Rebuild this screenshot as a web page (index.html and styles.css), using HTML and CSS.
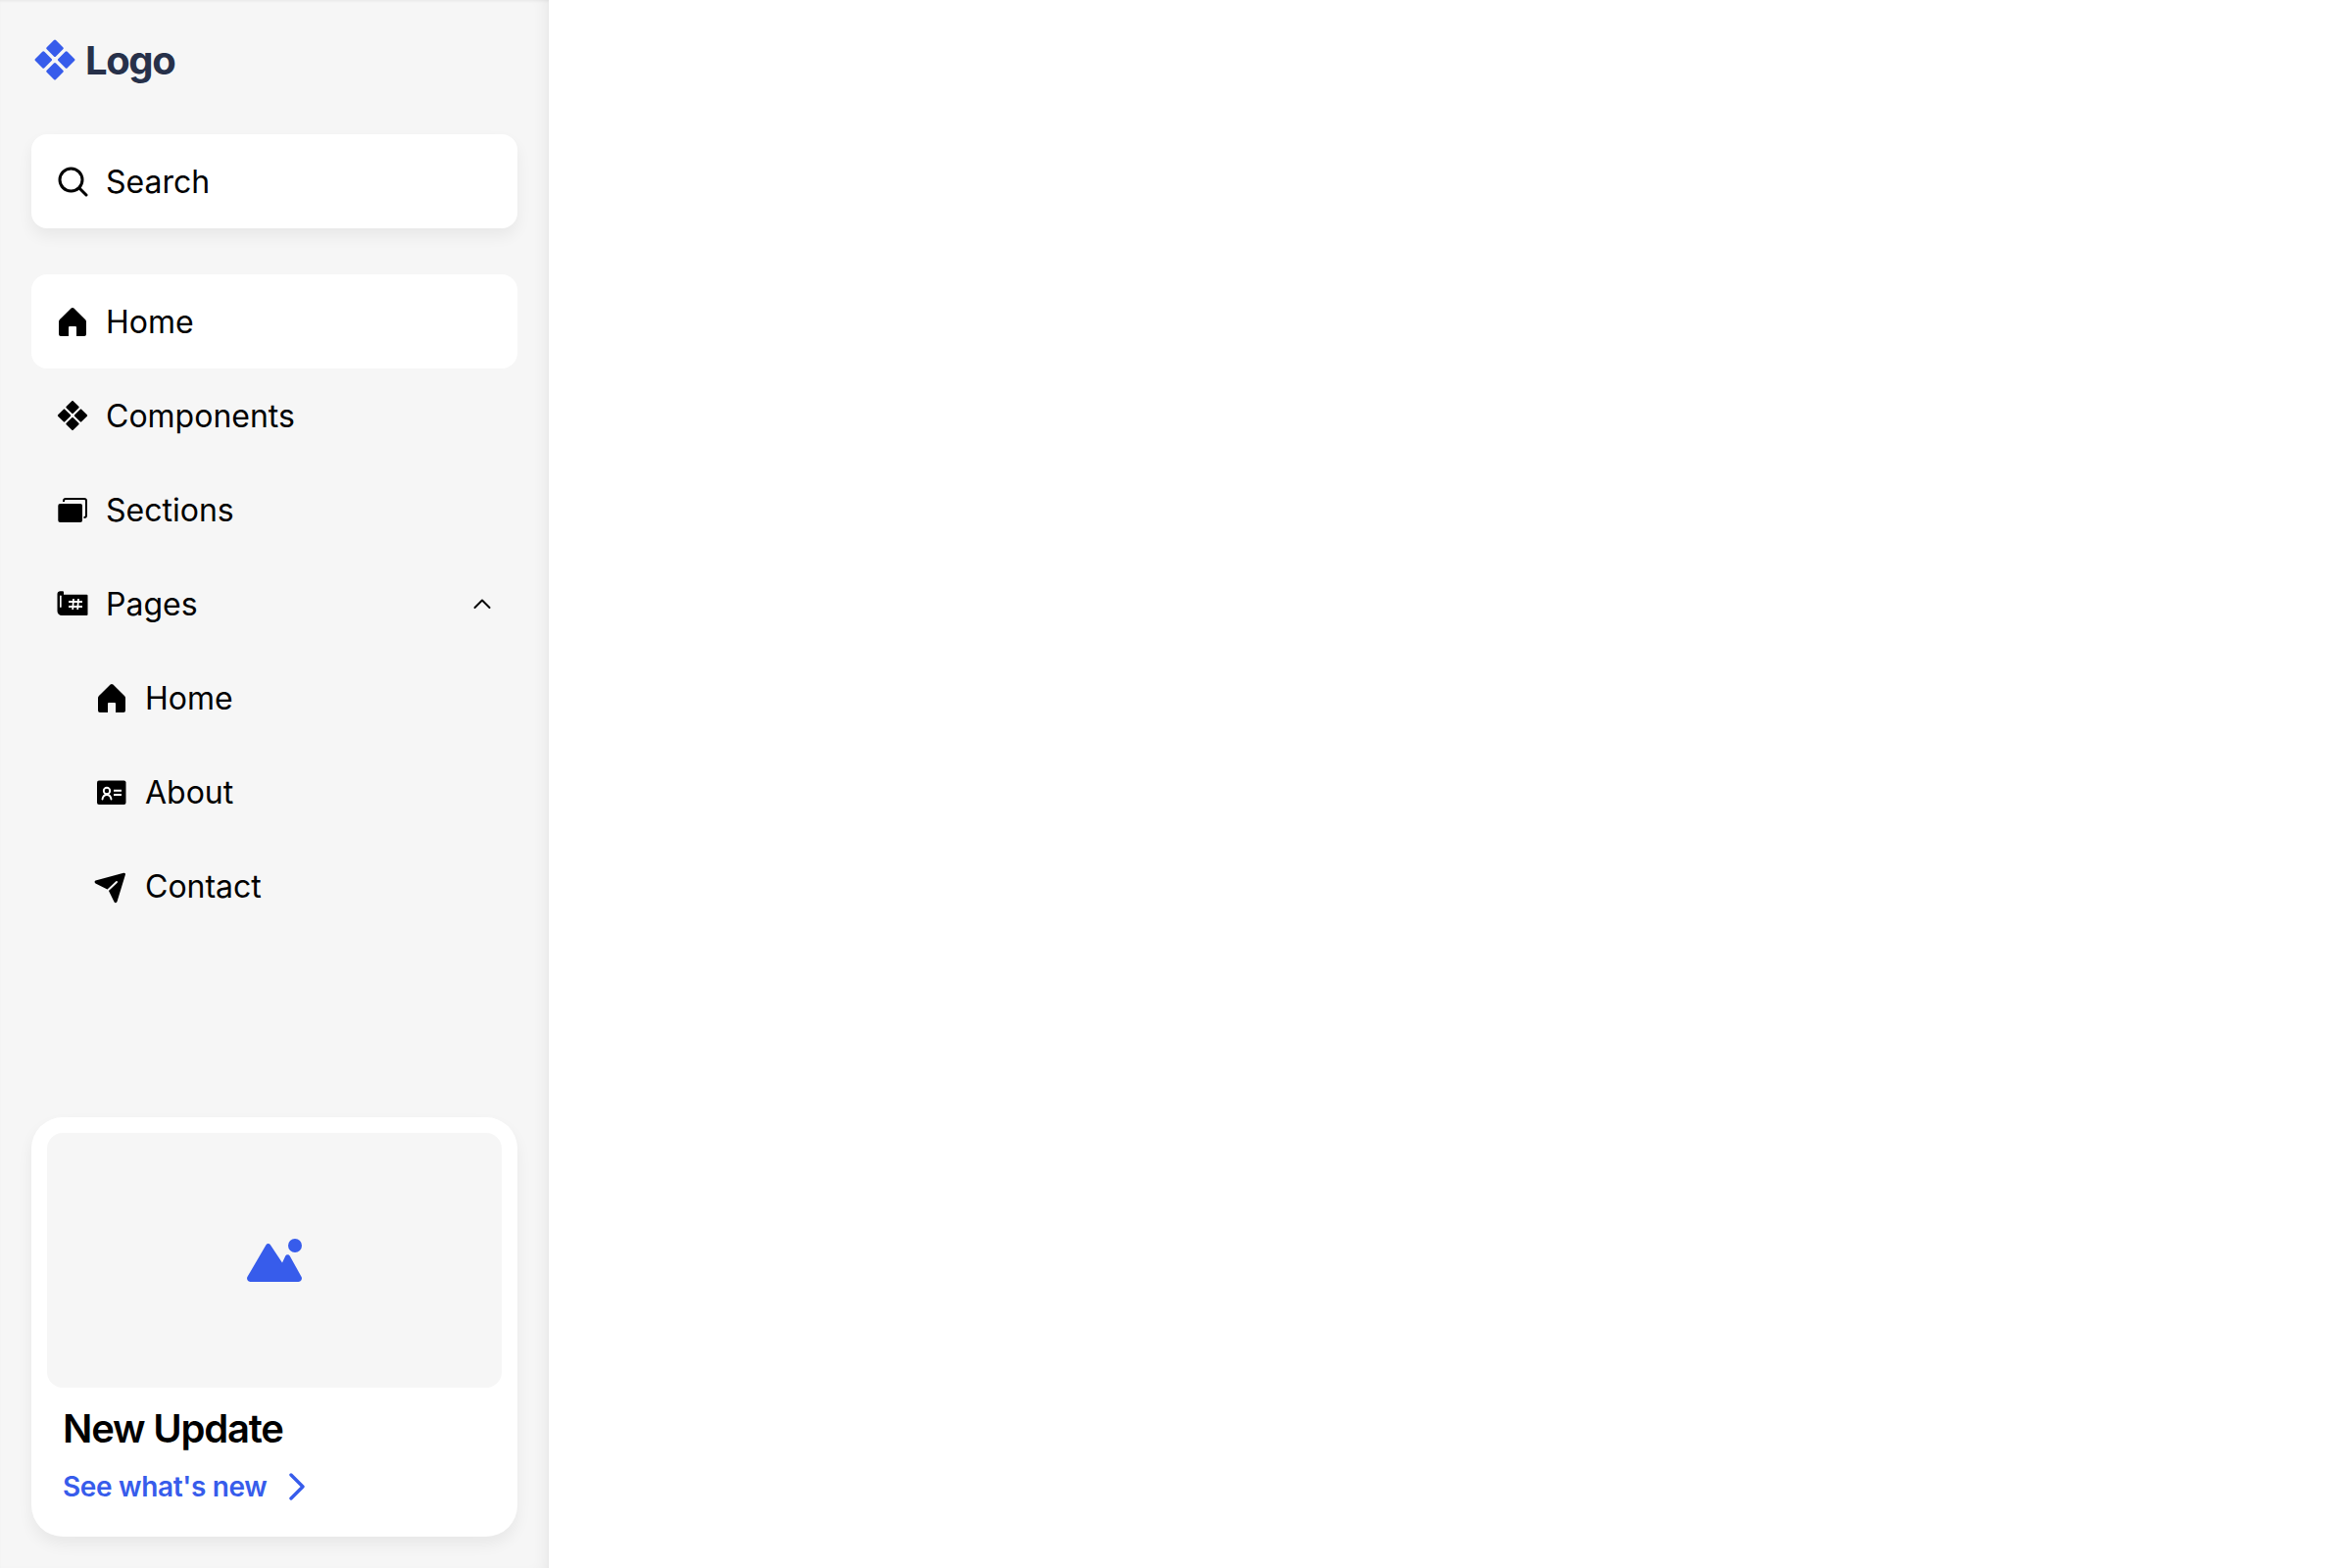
FILE: index.html
```html
<!DOCTYPE html>
<html lang="en">
<head>
    <meta charset="UTF-8">
    <title>Sidebar</title>
    <link rel="stylesheet" href="styles.css">
</head>
<body>
    <aside class="sidebar">
        <div class="logo">
            <svg class="logo-icon" viewBox="0 0 42 42" fill="#375ceb">
                <rect x="14.4" y="2.7" width="13.2" height="13.2" rx="1.5" transform="rotate(45 21 9.3)"/>
                <rect x="14.4" y="26.1" width="13.2" height="13.2" rx="1.5" transform="rotate(45 21 32.7)"/>
                <rect x="2.7" y="14.4" width="13.2" height="13.2" rx="1.5" transform="rotate(45 9.3 21)"/>
                <rect x="26.1" y="14.4" width="13.2" height="13.2" rx="1.5" transform="rotate(45 32.7 21)"/>
            </svg>
            <span class="logo-text">Logo</span>
        </div>

        <div class="search">
            <svg class="icon" viewBox="0 0 32 32" fill="none" stroke="#000" stroke-width="3" stroke-linecap="round">
                <circle cx="14.5" cy="14.5" r="11.5"/>
                <path d="M23 23l7 7"/>
            </svg>
            <span>Search</span>
        </div>

        <nav class="nav">
            <a class="nav-item active">
                <svg class="icon" viewBox="0 0 32 32"><path d="M14.6 2.6a2 2 0 0 1 2.800 0L29 14a3 3 0 0 1 1 2v13a2 2 0 0 1-2 2h-8v-9a1 1 0 0 0-1-1h-6a1 1 0 0 0-1 1v9H4a2 2 0 0 1-2-2V16a3 3 0 0 1 1-2z"/></svg>
                <span>Home</span>
            </a>
            <a class="nav-item">
                <svg class="icon" viewBox="0 0 32 32">
                    <rect x="11" y="2.500" width="10" height="10" rx="1" transform="rotate(45 16 7.500)"/>
                    <rect x="11" y="19.500" width="10" height="10" rx="1" transform="rotate(45 16 24.500)"/>
                    <rect x="2.500" y="11" width="10" height="10" rx="1" transform="rotate(45 7.500 16)"/>
                    <rect x="19.500" y="11" width="10" height="10" rx="1" transform="rotate(45 24.500 16)"/>
                </svg>
                <span>Components</span>
            </a>
            <a class="nav-item">
                <svg class="icon" viewBox="0 0 32 32">
                    <rect x="7" y="5" width="23" height="19" rx="2" fill="none" stroke="#000" stroke-width="2"/>
                    <rect x="0" y="8" width="27.500" height="22" rx="3" fill="#f6f6f6"/>
                    <rect x="1.300" y="10" width="24.700" height="19" rx="2"/>
                </svg>
                <span>Sections</span>
            </a>
            <a class="nav-item">
                <svg class="icon" viewBox="0 0 32 32">
                    <path d="M.5 6a3 3 0 0 1 3-2.700H6a1 1 0 0 1 1 1v2.400h23.500a1 1 0 0 1 1 1V27a1 1 0 0 1-1 1H5a4.500 4.500 0 0 1-4.500-4.500z"/>
                    <rect x="3" y="7.500" width="1.700" height="12.500" rx=".8" fill="#f6f6f6"/>
                    <path d="M12 14h14M12 19h14M17 11l-.8 11M22 11l-.8 11" stroke="#fff" stroke-width="1.800" fill="none"/>
                </svg>
                <span>Pages</span>
                <svg class="chevron" viewBox="0 0 20 20" fill="none" stroke="#000" stroke-width="2" stroke-linecap="round" stroke-linejoin="round"><path d="M2.500 14L10 6.500L17.500 14"/></svg>
            </a>
            <a class="nav-item sub">
                <svg class="icon" viewBox="0 0 32 32"><path d="M14.6 2.6a2 2 0 0 1 2.800 0L29 14a3 3 0 0 1 1 2v13a2 2 0 0 1-2 2h-8v-9a1 1 0 0 0-1-1h-6a1 1 0 0 0-1 1v9H4a2 2 0 0 1-2-2V16a3 3 0 0 1 1-2z"/></svg>
                <span>Home</span>
            </a>
            <a class="nav-item sub">
                <svg class="icon" viewBox="0 0 32 32">
                    <rect x="1" y="4.500" width="29.500" height="24.500" rx="2"/>
                    <circle cx="11" cy="15" r="3.200" fill="none" stroke="#fff" stroke-width="1.900"/>
                    <path d="M6.500 23.500c.5-2.800 2.300-4.500 4.500-4.500s4 1.700 4.500 4.500" fill="none" stroke="#fff" stroke-width="1.900" stroke-linecap="round"/>
                    <path d="M18 14.700h8M18 19h8" stroke="#fff" stroke-width="1.900"/>
                </svg>
                <span>About</span>
            </a>
            <a class="nav-item sub">
                <svg class="icon icon-send" viewBox="2 -2 32 32">
                    <path d="M1.500 8.600L30.100.7a1.500 1.500 0 0 1 1.800 1.900L23.500 30a1.600 1.600 0 0 1-3 .3L14.500 18L1.500 11.500a1.600 1.600 0 0 1 0-2.900z"/>
                    <path d="M14.500 18L23 10" stroke="#f6f6f6" stroke-width="2" stroke-linecap="round" fill="none"/>
                </svg>
                <span>Contact</span>
            </a>
        </nav>

        <div class="update-card">
            <div class="update-image">
                <svg class="mountain" viewBox="0 0 56 44">
                    <circle cx="49" cy="7" r="7"/>
                    <path d="M3.500 44a3.500 3.500 0 0 1-3-5.200L19.500 6.200a2.600 2.600 0 0 1 4.400 0L36 24.500l3.300-7a2.500 2.500 0 0 1 4.400 0l11.800 21.300a3.500 3.500 0 0 1-3 5.200z"/>
                </svg>
            </div>
            <h3 class="update-title">New Update</h3>
            <a class="update-link">
                <span>See what's new</span>
                <svg class="arrow" viewBox="0 0 16 28" fill="none" stroke="#375ceb" stroke-width="3.400" stroke-linecap="round" stroke-linejoin="round"><path d="M2 2l12 12L2 26"/></svg>
            </a>
        </div>
    </aside>
</body>
</html>
```

FILE: styles.css
```css
* {
    box-sizing: border-box;
}
body {
    margin: 0;
    padding: 0;
    background-color: white;
    font-family: Inter, "Liberation Sans", sans-serif;
    color: black;
}
.sidebar {
    width: 560px;
    height: 1600px;
    padding: 0 32px 32px;
    display: flex;
    flex-direction: column;
    background-color: #f6f6f6;
    box-shadow: inset -12px 0 16px -10px rgba(0, 0, 0, 0.07), inset 0 2px 3px -1px rgba(0, 0, 0, 0.06);
}
.logo {
    height: 122px;
    margin-bottom: 15px;
    padding-left: 3px;
    display: flex;
    align-items: center;
    gap: 10px;
}
.logo-icon {
    width: 42px;
    height: 42px;
}
.logo-text {
    font-size: 40px;
    font-weight: 700;
    letter-spacing: -0.035em;
    color: #27314a;
}
.search {
    height: 96px;
    padding: 0 18px 0 26px;
    display: flex;
    align-items: center;
    gap: 18px;
    font-size: 32px;
    background: white;
    border-radius: 16px;
    box-shadow: 0 8px 16px rgba(0, 0, 0, 0.06);
}
.nav {
    margin-top: 47px;
    display: flex;
    flex-direction: column;
}
.nav-item {
    height: 96px;
    padding: 0 26px;
    display: flex;
    align-items: center;
    gap: 18px;
    font-size: 32px;
    border-radius: 16px;
}
.nav-item.active {
    background: white;
}
.nav-item.sub {
    padding-left: 66px;
}
.icon {
    width: 32px;
    height: 32px;
    flex-shrink: 0;
}
.icon-send {
    overflow: visible;
}
.chevron {
    width: 20px;
    height: 20px;
    margin-left: auto;
}
.update-card {
    margin-top: auto;
    height: 428px;
    padding: 16px;
    background: white;
    border-radius: 32px;
    box-shadow: 0 8px 16px rgba(0, 0, 0, 0.06);
}
.update-image {
    height: 260px;
    display: flex;
    align-items: center;
    justify-content: center;
    background: #f6f6f6;
    border-radius: 16px;
}
.mountain {
    width: 56px;
    height: 44px;
    fill: #375ceb;
}
.update-title {
    margin: 19px 0 0 16px;
    font-size: 40px;
    line-height: 46px;
    font-weight: 600;
    letter-spacing: -0.03em;
}
.update-link {
    margin: 19px 0 0 16px;
    display: flex;
    align-items: center;
    gap: 23px;
    font-size: 28px;
    font-weight: 600;
    letter-spacing: -0.012em;
    color: #375ceb;
}
.arrow {
    width: 16px;
    height: 28px;
}
```
